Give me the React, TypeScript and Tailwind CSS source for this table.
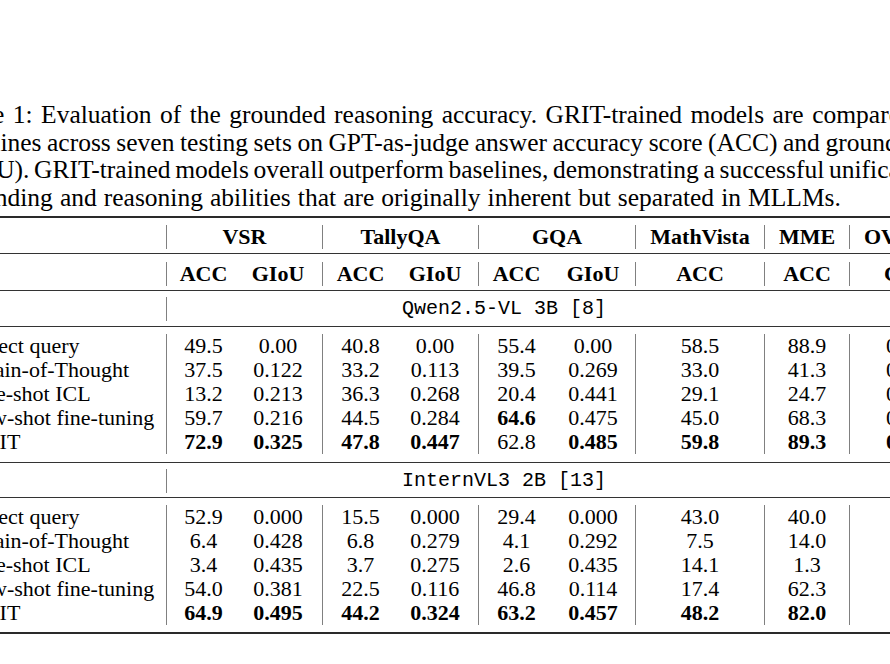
import React from "react";

const SERIF = "font-['Liberation_Serif','Times_New_Roman',serif]";
const MONO = "font-['Liberation_Mono','Courier_New',monospace]";

const COLS = [
  "w-[74px] border-l border-[#808080] text-center",
  "w-[82px] pr-[6px] text-center",
  "w-[76px] border-l border-[#808080] text-center",
  "w-[80px] pr-[6px] text-center",
  "w-[76px] border-l border-[#808080] text-center",
  "w-[81px] pr-[3px] text-center",
  "w-[129px] border-l border-[#808080] text-center",
  "w-[85px] border-l border-[#808080] text-center",
  "w-[200px] border-l border-[#808080] pl-[36px] text-left",
];

type RowData = [string, string[]];

const qwen: RowData[] = [
  ["Direct query", ["49.5", "0.00", "40.8", "0.00", "55.4", "0.00", "58.5", "88.9", "0"]],
  ["Chain-of-Thought", ["37.5", "0.122", "33.2", "0.113", "39.5", "0.269", "33.0", "41.3", "0"]],
  ["One-shot ICL", ["13.2", "0.213", "36.3", "0.268", "20.4", "0.441", "29.1", "24.7", "0"]],
  ["Few-shot fine-tuning", ["59.7", "0.216", "44.5", "0.284", "*64.6", "0.475", "45.0", "68.3", "0"]],
  ["GRIT", ["*72.9", "*0.325", "*47.8", "*0.447", "62.8", "*0.485", "*59.8", "*89.3", "*0"]],
];

const intern: RowData[] = [
  ["Direct query", ["52.9", "0.000", "15.5", "0.000", "29.4", "0.000", "43.0", "40.0", ""]],
  ["Chain-of-Thought", ["6.4", "0.428", "6.8", "0.279", "4.1", "0.292", "7.5", "14.0", ""]],
  ["One-shot ICL", ["3.4", "0.435", "3.7", "0.275", "2.6", "0.435", "14.1", "1.3", ""]],
  ["Few-shot fine-tuning", ["54.0", "0.381", "22.5", "0.116", "46.8", "0.114", "17.4", "62.3", ""]],
  ["GRIT", ["*64.9", "*0.495", "*44.2", "*0.324", "*63.2", "*0.457", "*48.2", "*82.0", ""]],
];

function DataRow({ row }: { row: RowData }) {
  const [label, cells] = row;
  return (
    <div className="flex h-[24px] leading-[24px]">
      <div className="w-[197px] shrink-0">{label}</div>
      {cells.map((c, i) => {
        const bold = c.startsWith("*");
        const text = bold ? c.slice(1) : c;
        return (
          <div key={i} className={`shrink-0 ${COLS[i]} ${bold ? "font-bold" : ""}`}>
            {text}
          </div>
        );
      })}
    </div>
  );
}

function ModelRow({ name }: { name: string }) {
  return (
    <div className="flex h-[24px] leading-[24px]">
      <div className="w-[197px] shrink-0" />
      <div className={`w-[900px] shrink-0 border-l border-[#808080] pl-[235px] text-[20px] ${MONO}`}>{name}</div>
    </div>
  );
}

export default function App() {
  return (
    <div className="w-[890px] h-[664px] overflow-hidden bg-white text-black">
      <div className={`${SERIF} ml-[-52px] mt-[101px] text-[25.5px] leading-[27.5px] whitespace-nowrap`}>
        <div className="[word-spacing:2.1px]">
          Table 1: Evaluation of the grounded reasoning accuracy. GRIT-trained models are compared with
        </div>
        <div className="[word-spacing:-0.8px]">
          baselines across seven testing sets on GPT-as-judge answer accuracy score (ACC) and grounding IoU
        </div>
        <div className="[word-spacing:-1.7px]">
          (GIoU). GRIT-trained models overall outperform baselines, demonstrating a successful unification of
        </div>
        <div className="[word-spacing:0.7px]">
          grounding and reasoning abilities that are originally inherent but separated in MLLMs.
        </div>
      </div>

      <div className={`${SERIF} ml-[-31px] mt-[5px] w-[1200px] text-[22px] whitespace-nowrap`}>
        <div className="h-[2px] bg-[#2a2a2a]" />
        <div className="h-[7px]" />
        <div className="flex h-[24px] leading-[24px] font-bold">
          <div className="w-[197px] shrink-0" />
          <div className="w-[156px] shrink-0 border-l border-[#808080] text-center">VSR</div>
          <div className="w-[156px] shrink-0 border-l border-[#808080] text-center">TallyQA</div>
          <div className="w-[157px] shrink-0 border-l border-[#808080] text-center">GQA</div>
          <div className="w-[129px] shrink-0 border-l border-[#808080] text-center">MathVista</div>
          <div className="w-[85px] shrink-0 border-l border-[#808080] text-center">MME</div>
          <div className="w-[200px] shrink-0 border-l border-[#808080] pl-[14px]">OVDEval</div>
        </div>
        <div className="h-[4px]" />
        <div className="h-px bg-[#333]" />
        <div className="h-[8px]" />
        <div className="flex h-[24px] leading-[24px] font-bold">
          <div className="w-[197px] shrink-0" />
          {["ACC", "GIoU", "ACC", "GIoU", "ACC", "GIoU", "ACC", "ACC"].map((t, i) => (
            <div key={i} className={`shrink-0 ${COLS[i]}`}>
              {t}
            </div>
          ))}
          <div className="w-[200px] shrink-0 border-l border-[#808080] pl-[34px]">GIoU</div>
        </div>
        <div className="h-[4px]" />
        <div className="h-px bg-[#333]" />
        <div className="h-[6px]" />
        <ModelRow name="Qwen2.5-VL 3B [8]" />
        <div className="h-[5px]" />
        <div className="h-px bg-[#333]" />
        <div className="h-[7px]" />
        {qwen.map((r, i) => (
          <DataRow key={i} row={r} />
        ))}
        <div className="h-[8px]" />
        <div className="h-px bg-[#333]" />
        <div className="h-[6px]" />
        <ModelRow name="InternVL3 2B [13]" />
        <div className="h-[4px]" />
        <div className="h-px bg-[#333]" />
        <div className="h-[7px]" />
        {intern.map((r, i) => (
          <DataRow key={i} row={r} />
        ))}
        <div className="h-[7px]" />
        <div className="h-[2px] bg-[#2a2a2a]" />
      </div>
    </div>
  );
}
